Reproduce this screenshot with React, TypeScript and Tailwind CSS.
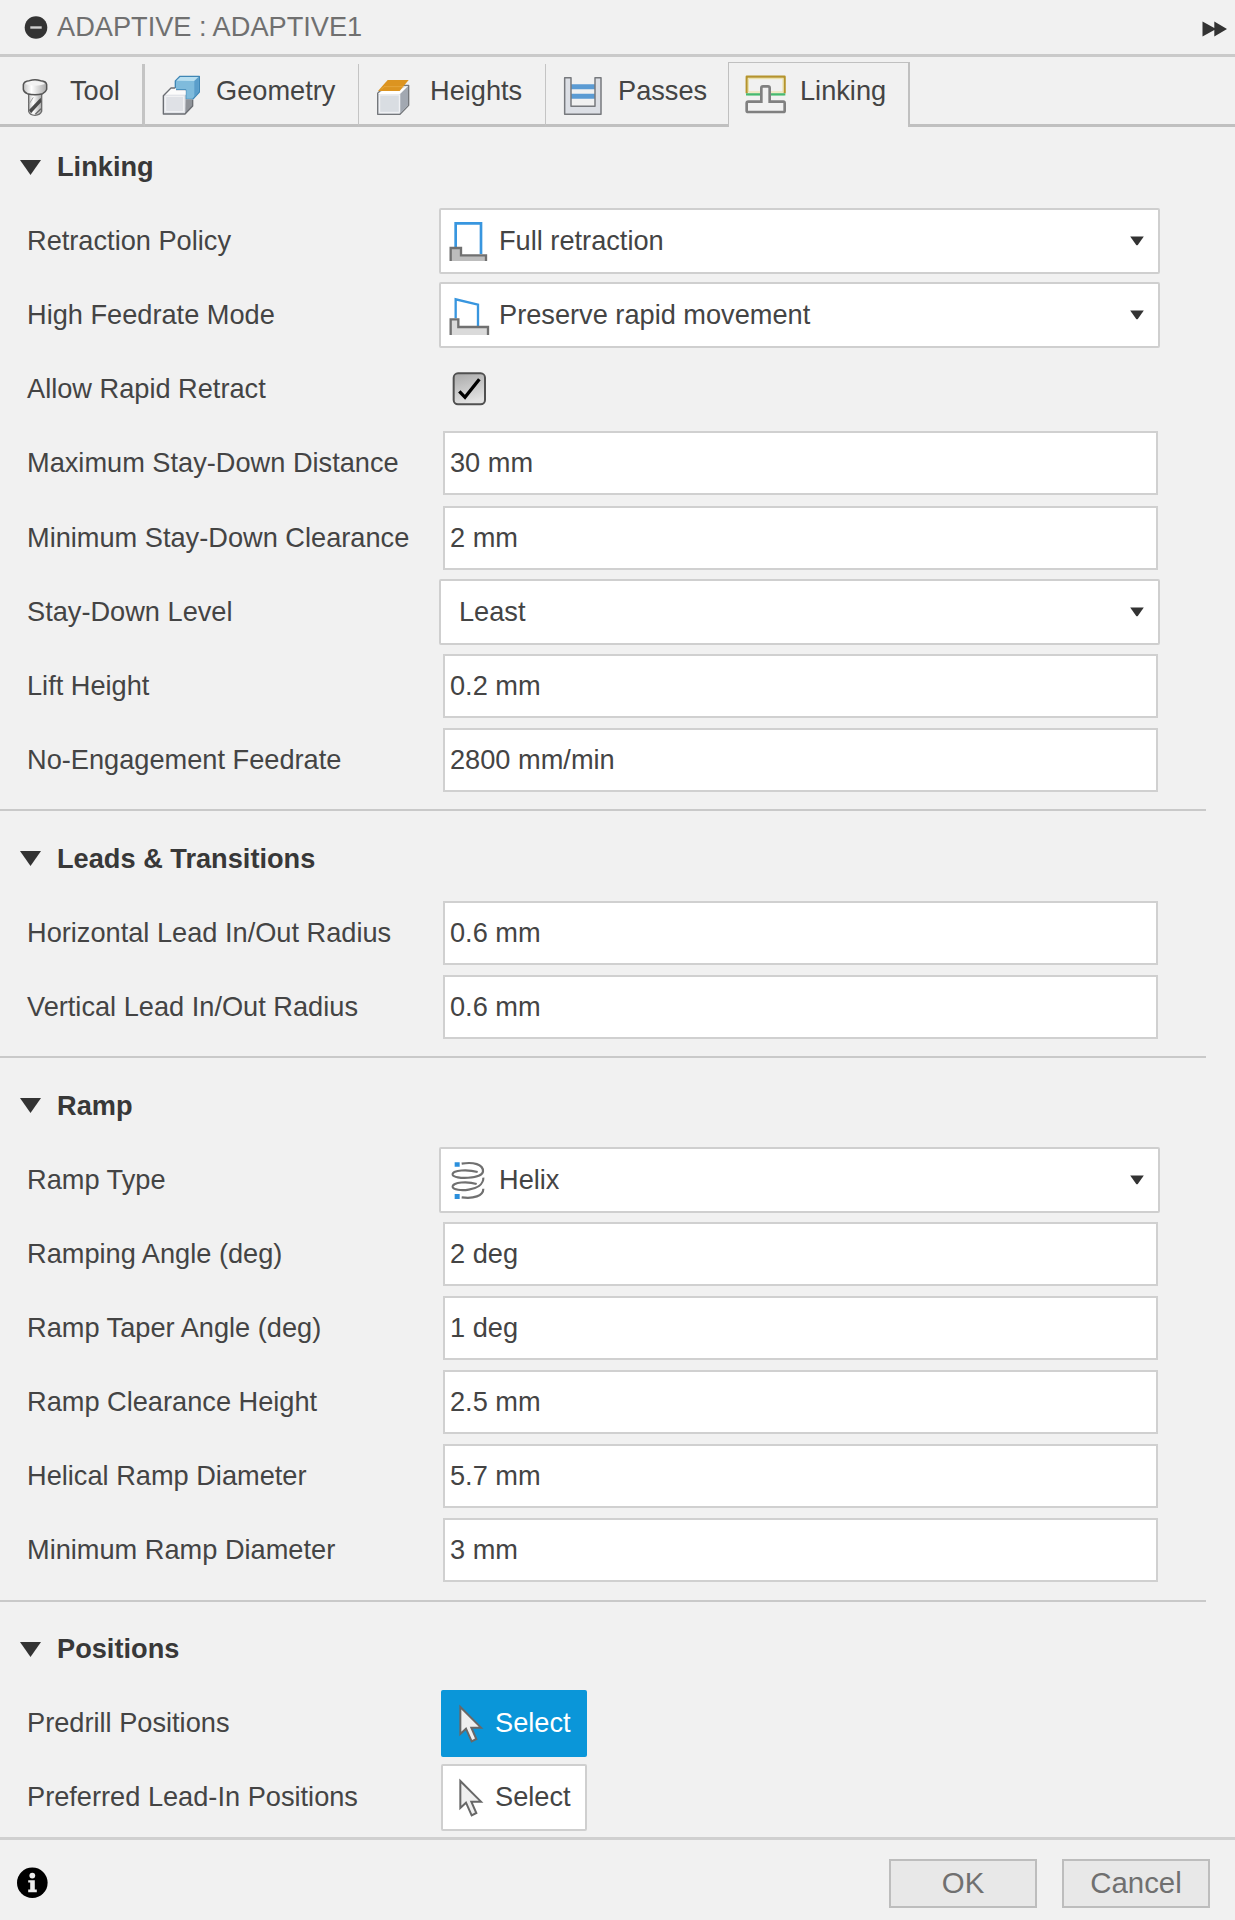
import type { ReactNode } from "react";

function ToolIcon() {
  return (
    <svg viewBox="60 231 90 120" className="h-[40px] w-[30px] shrink-0">
      <defs>
        <linearGradient id="toolBody" x1="0" x2="1" y1="0" y2="0">
          <stop offset="0" stopColor="#c2c2c2" />
          <stop offset="0.35" stopColor="#ffffff" />
          <stop offset="1" stopColor="#a9a9a9" />
        </linearGradient>
      </defs>
      <path d="M86 282V334Q89 345 105 346Q121 345 125 334V282Z" fill="url(#toolBody)" stroke="#6c6c6c" strokeWidth="4" />
      <path d="M87 330L122 293L124 306L93 340Z" fill="#4a4a4a" />
      <path d="M87 312L100 292" stroke="#a0a0a0" strokeWidth="3" fill="none" />
      <path d="M106 343L123 326" stroke="#666" strokeWidth="4" fill="none" />
      <path d="M70 254Q72 243 88 242Q105 237 122 242Q139 243 140 254V268Q138 275 128 281Q105 287 82 281Q71 276 70 268Z" fill="url(#toolBody)" stroke="#555" strokeWidth="4.5" />
      <path d="M75 252Q105 262 135 252Q130 245 105 244Q80 245 75 252Z" fill="#f3f3f3" />
    </svg>
  );
}

function GeometryIcon() {
  return (
    <svg viewBox="483 222 123 129" className="h-[43px] w-[41px] shrink-0">
      <path d="M526 243L540 229H598V276L578 298H557V270H526Z" fill="#7fbbdc" stroke="#3f86b5" strokeWidth="4" strokeLinejoin="round" />
      <path d="M529 242L541 231H595L583 243Z" fill="#b9dff0" />
      <path d="M583 243L596 231V275L583 290Z" fill="#5a9ecb" />
      <path d="M490 287L513 264H528V270H557V298H578L556 342H492Z" fill="#d4d6dc" />
      <path d="M557 298H578V318L556 342Z" fill="#8f9399" />
      <path d="M492 284L513 264H528V272H557V284Z" fill="#fbfbfb" />
      <path d="M492 285H555V341H492Z" fill="#dfe1e6" />
      <path d="M526 264H513L490 287V342H555L578 318V300" fill="none" stroke="#6b6e73" strokeWidth="4" strokeLinejoin="round" />
      <path d="M497 289H551V335H497Z" fill="none" stroke="#f3f4f6" strokeWidth="3" />
    </svg>
  );
}

function HeightsIcon() {
  return (
    <svg viewBox="1128 234 108 117" className="h-[39px] w-[36px] shrink-0">
      <path d="M1133 280L1158 256H1226V316L1200 343H1133Z" fill="#dfe2e6" stroke="#74777b" strokeWidth="4" strokeLinejoin="round" />
      <path d="M1136 280L1152 270H1197L1224 258L1201 282H1136Z" fill="#ffffff" />
      <path d="M1201 281L1224 259V315L1201 340Z" fill="#a2a8b1" />
      <path d="M1139 285H1198V337H1139Z" fill="#d9dde2" stroke="#f4f5f7" strokeWidth="3" />
      <path d="M1134 273L1163 240H1226L1199 273Z" fill="#dc9420" />
      <path d="M1144 268L1152 260H1210" stroke="#ecb04a" strokeWidth="2" fill="none" />
    </svg>
  );
}

function PassesIcon() {
  return (
    <svg viewBox="669 228 120 120" className="h-[40px] w-[40px] shrink-0">
      <path d="M692 260H766M692 289H766" stroke="#5b9bd3" strokeWidth="15" />
      <path d="M674 233H693V319H765V233H783V343H674Z" fill="#dcdfe5" stroke="#77797d" strokeWidth="4.5" strokeLinejoin="round" />
    </svg>
  );
}

function LinkingIcon() {
  return (
    <svg viewBox="1215 225 126 120" className="h-[40px] w-[42px] shrink-0">
      <path d="M1223 282H1332" stroke="#d5efdd" strokeWidth="12" />
      <path d="M1220 280V230H1334V280" fill="#f5f2e6" stroke="#b5942c" strokeWidth="6.5" strokeLinejoin="round" />
      <path d="M1225 276V236H1329V276Z" fill="#f1f1f1" stroke="#e9dfa0" strokeWidth="3" />
      <path d="M1218 283H1336" stroke="#48b96f" strokeWidth="7" />
      <path d="M1220 310Q1220 305 1225 305H1264V264Q1264 259 1269 259H1284Q1289 259 1289 264V305H1330Q1334 305 1334 310V332Q1334 336 1330 336H1225Q1220 336 1220 332Z" fill="#f1f1f1" stroke="#808080" strokeWidth="8" />
    </svg>
  );
}

function FullRetractionIcon() {
  return (
    <svg viewBox="87 93 120 123" className="h-[41px] w-[40px] shrink-0">
      <path d="M107 172V100H183V192" fill="none" stroke="#3896df" strokeWidth="8" />
      <path d="M92 213V174H123V196H200V213Z" fill="#bdbdbd" />
      <path d="M92 213V174H123V196H198V213" fill="none" stroke="#707070" strokeWidth="7" />
    </svg>
  );
}

function PreserveIcon() {
  return (
    <svg viewBox="87 318 123 120" className="h-[40px] w-[41px] shrink-0">
      <path d="M107 385V328L174 344V409" fill="none" stroke="#3896df" strokeWidth="7" />
      <path d="M92 435V388H115V411H206V435Z" fill="#dadada" />
      <path d="M92 435V388H115V411H204V435" fill="none" stroke="#707070" strokeWidth="7" />
    </svg>
  );
}

function HelixIcon() {
  return (
    <svg viewBox="93 87 105 120" className="h-[40px] w-[35px] shrink-0">
      <g fill="none" stroke="#707070" strokeWidth="6.5">
        <path d="M125 98C160 92 190 100 189 121C187 144 102 146 98 131C96 116 145 115 173 123" />
        <path d="M190 140C192 182 102 184 98 168C96 152 145 151 170 159" />
        <path d="M190 173C190 195 160 204 125 199" />
      </g>
      <path d="M104 94H119V107H104ZM104 189H119V204H104Z" fill="#2b8fdc" />
    </svg>
  );
}

function CheckedBox() {
  return (
    <svg viewBox="96 543 105 105" className="-mt-px ml-[10px] h-[35px] w-[35px]">
      <defs>
        <linearGradient id="boxFill" x1="0" x2="0.3" y1="0" y2="1">
          <stop offset="0" stopColor="#a8a8a8" />
          <stop offset="1" stopColor="#e2e2e2" />
        </linearGradient>
      </defs>
      <rect x="101" y="550" width="94" height="93" rx="13" fill="url(#boxFill)" stroke="#505050" strokeWidth="6" />
      <path d="M118 604L135 622L178 568" fill="none" stroke="#000" strokeWidth="10" />
    </svg>
  );
}

function CursorIcon() {
  return (
    <svg viewBox="114 99 78 123" className="h-[41px] w-[26px] shrink-0">
      <path d="M121 111V192L138 176L155 214L169 207L154 173H183Z" fill="#efefef" stroke="#686868" strokeWidth="6" />
    </svg>
  );
}

function Caret() {
  return (
    <svg viewBox="0 0 14 10" className="mr-[14px] ml-auto h-[10px] w-[14px] shrink-0">
      <path d="M0.2 0.6H13.8L7.8 8.9Q7 9.8 6.2 8.9Z" fill="#333" />
    </svg>
  );
}

function Tab({ className, icon, label }: { className: string; icon: ReactNode; label: string }) {
  return (
    <div className={`mt-[7px] flex items-start border-b-[3px] border-b-[#c0c0c0] border-r-[#c4c4c4] ${className}`}>
      {icon}
      <span className="leading-[54px]">{label}</span>
    </div>
  );
}

function Section({ title, children }: { title: string; children: ReactNode }) {
  return (
    <section>
      <h2 className="flex h-[74.1px] items-center pl-[20px] font-bold text-[#383838]">
        <svg viewBox="0 0 21 15" className="mr-[16px] h-[15px] w-[21px]">
          <path d="M0 0H21L10.5 15Z" fill="#333" />
        </svg>
        {title}
      </h2>
      {children}
    </section>
  );
}

function Divider() {
  return <hr className="mt-[12.4px] mb-[10.4px] h-[2px] w-[1206px] border-0 bg-[#c9c9c9]" />;
}

function Row({ label, children }: { label: string; children: ReactNode }) {
  return (
    <div className="flex h-[74.1px] items-center">
      <div className="w-[442px] shrink-0 pl-[27px]">{label}</div>
      {children}
    </div>
  );
}

function Input({ label, value }: { label: string; value: string }) {
  return (
    <Row label={label}>
      <div className="ml-px flex h-[64px] w-[715px] items-center border-2 border-[#d0d0d0] bg-white pl-[5px]">{value}</div>
    </Row>
  );
}

function Combo({ label, children }: { label: string; children: ReactNode }) {
  return (
    <Row label={label}>
      <div className="-ml-[3px] flex h-[66px] w-[721px] items-center rounded-[2px] border-2 border-[#cfcfcf] bg-white">
        {children}
        <Caret />
      </div>
    </Row>
  );
}

export default function App() {
  return (
    <div className="flex h-[1920px] w-[1235px] flex-col overflow-hidden bg-[#f1f1f1] font-['Liberation_Sans',Arial,sans-serif] text-[27.2px] leading-[30px] whitespace-nowrap text-[#444]">
      <header className="flex h-[57px] items-center border-b-[3px] border-[#cacaca] text-[#707070]">
        <svg viewBox="0 0 24 24" className="ml-[24px] h-[24px] w-[24px]">
          <circle cx="12" cy="12.5" r="11.3" fill="#333" />
          <path d="M6.3 12.5H17.7" stroke="#cfcfcf" strokeWidth="2.4" />
        </svg>
        <span className="ml-[9px]">ADAPTIVE : ADAPTIVE1</span>
        <svg viewBox="0 0 25 16" className="mt-[3px] mr-[8px] ml-auto h-[16px] w-[25px]">
          <path d="M0.5 0.5L12.3 7V0.5L25 8L12.3 15.5V9L0.5 15.5Z" fill="#333" />
        </svg>
      </header>

      <nav className="flex h-[70px] shrink-0">
        <Tab className="w-[145px] gap-[20px] border-r-[3px] pl-[20px] [&>svg]:mt-[13px]" icon={<ToolIcon />} label="Tool" />
        <Tab className="w-[214px] gap-[14px] border-r pl-[16px] [&>svg]:mt-[10px]" icon={<GeometryIcon />} label="Geometry" />
        <Tab className="w-[187px] gap-[18px] border-r pl-[17px] [&>svg]:mt-[14px]" icon={<HeightsIcon />} label="Heights" />
        <Tab className="w-[182px] gap-[15px] pl-[17px] [&>svg]:mt-[12px]" icon={<PassesIcon />} label="Passes" />
        <div className="mt-[5px] flex w-[182px] items-start gap-[13px] border-t border-r-2 border-l border-[#c0c0c0] pl-[16px] [&>svg]:mt-[12px]">
          <LinkingIcon />
          <span className="leading-[56px]">Linking</span>
        </div>
        <div className="flex-1 border-b-[3px] border-[#c0c0c0]" />
      </nav>

      <main className="h-[1710px] shrink-0 pt-[3px]">
        <Section title="Linking">
          <Combo label="Retraction Policy">
            <span className="ml-[8px] flex items-center gap-[10px]">
              <FullRetractionIcon />
              Full retraction
            </span>
          </Combo>
          <Combo label="High Feedrate Mode">
            <span className="ml-[8px] flex items-center gap-[9px] [&>svg]:mt-[2px]">
              <PreserveIcon />
              Preserve rapid movement
            </span>
          </Combo>
          <Row label="Allow Rapid Retract">
            <CheckedBox />
          </Row>
          <Input label="Maximum Stay-Down Distance" value="30 mm" />
          <Input label="Minimum Stay-Down Clearance" value="2 mm" />
          <Combo label="Stay-Down Level">
            <span className="ml-[18px]">Least</span>
          </Combo>
          <Input label="Lift Height" value="0.2 mm" />
          <Input label="No-Engagement Feedrate" value="2800 mm/min" />
        </Section>
        <Divider />
        <Section title="Leads &amp; Transitions">
          <Input label="Horizontal Lead In/Out Radius" value="0.6 mm" />
          <Input label="Vertical Lead In/Out Radius" value="0.6 mm" />
        </Section>
        <Divider />
        <Section title="Ramp">
          <Combo label="Ramp Type">
            <span className="ml-[10px] flex items-center gap-[13px]">
              <HelixIcon />
              Helix
            </span>
          </Combo>
          <Input label="Ramping Angle (deg)" value="2 deg" />
          <Input label="Ramp Taper Angle (deg)" value="1 deg" />
          <Input label="Ramp Clearance Height" value="2.5 mm" />
          <Input label="Helical Ramp Diameter" value="5.7 mm" />
          <Input label="Minimum Ramp Diameter" value="3 mm" />
        </Section>
        <Divider />
        <Section title="Positions">
          <Row label="Predrill Positions">
            <button className="-ml-px flex h-[67px] w-[146px] items-center gap-[11px] rounded-[2px] bg-[#0a96d9] pl-[17px] text-white">
              <CursorIcon />
              Select
            </button>
          </Row>
          <Row label="Preferred Lead-In Positions">
            <button className="-ml-px flex h-[67px] w-[146px] items-center gap-[11px] rounded-[2px] border-2 border-[#cfcfcf] bg-white pl-[15px]">
              <CursorIcon />
              Select
            </button>
          </Row>
        </Section>
      </main>

      <footer className="flex flex-1 items-center border-t-[3px] border-[#d0d0d0] pt-[6px] text-[29.4px] text-[#707070]">
        <svg viewBox="0 0 32 32" className="ml-[16px] h-[32px] w-[32px]">
          <circle cx="16.3" cy="15.7" r="15.3" fill="#000" />
          <circle cx="16.3" cy="8.6" r="2.9" fill="#ececec" />
          <path d="M12.2 13.3H18.8V22.6H20.8V25.3H12.2V22.6H14.2V15.6H12.2Z" fill="#ececec" />
        </svg>
        <button className="ml-auto h-[49px] w-[148px] border-2 border-[#bdbdbd] bg-[#e8e8e8]">OK</button>
        <button className="mr-[25px] ml-[25px] h-[49px] w-[148px] border-2 border-[#bdbdbd] bg-[#e8e8e8]">Cancel</button>
      </footer>
    </div>
  );
}
